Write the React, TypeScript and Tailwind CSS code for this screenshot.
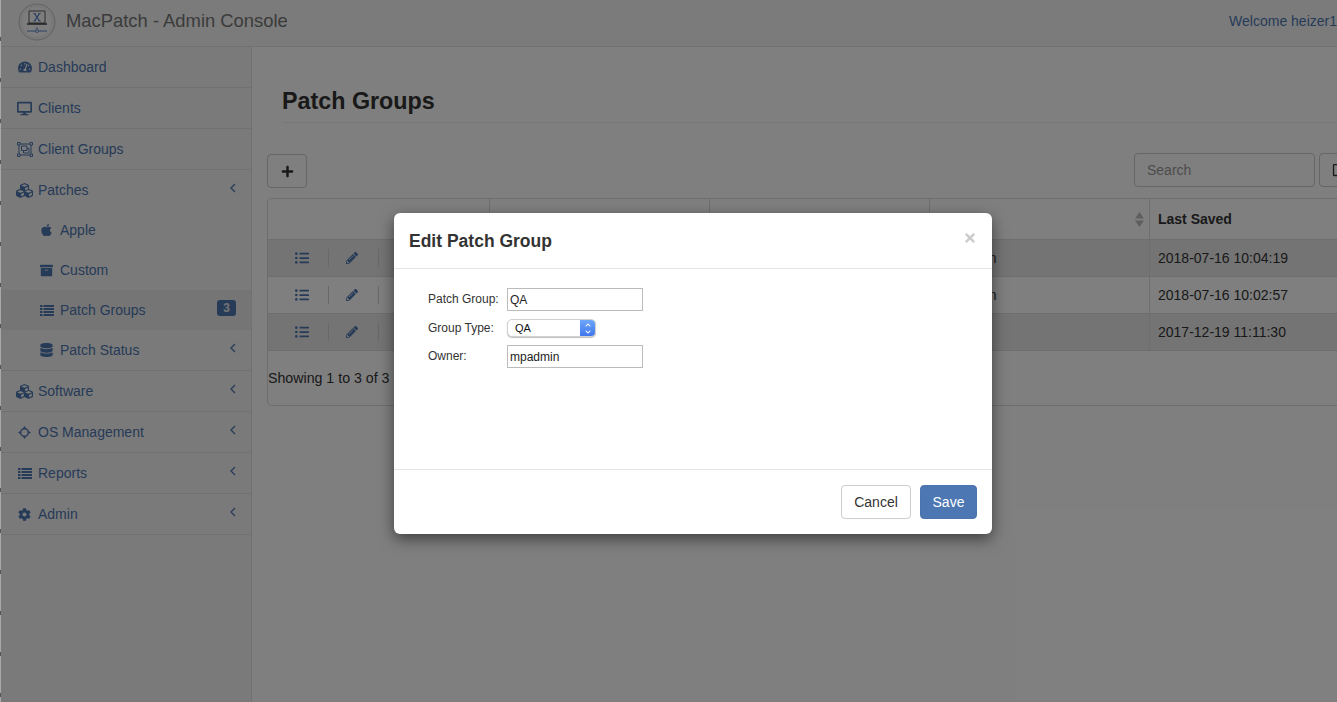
import type { ReactNode } from "react";
import {
  FaApple,
  FaArchive,
  FaChevronDown,
  FaChevronUp,
  FaCog,
  FaCubes,
  FaDatabase,
  FaDesktop,
  FaListUl,
  FaPencilAlt,
  FaPlus,
  FaRegSquare,
  FaTachometerAlt,
  FaTimes,
} from "react-icons/fa";

const font = { fontFamily: '"Liberation Sans", Arial, sans-serif' };

function Logo() {
  return (
    <svg width="38" height="38" viewBox="0 0 38 38" className="shrink-0">
      <circle cx="19" cy="19" r="18" fill="#f2f2f2" stroke="#c4c4c4" strokeWidth="1" />
      <circle cx="19" cy="19" r="15.5" fill="#fafafa" stroke="#e0e0e0" strokeWidth="0.5" />
      <path d="M11 8h16v12H11z" fill="none" stroke="#333" strokeWidth="0.8" />
      <path d="M9 21h20" stroke="#333" strokeWidth="1.4" />
      <path d="M16.5 10.5l5 7.5M21.5 10.5l-5 7.5" stroke="#3f6fc0" strokeWidth="1.1" />
      <path d="M15 10.5h3M20 10.5h3M15 18h3M20 18h3" stroke="#3f6fc0" strokeWidth="0.6" />
      <path d="M9 28h20" stroke="#4a78c8" strokeWidth="0.9" />
      <path d="M19 24v3" stroke="#4a78c8" strokeWidth="0.8" />
      <circle cx="19" cy="28" r="1.5" fill="#fff" stroke="#4a78c8" strokeWidth="0.8" />
    </svg>
  );
}

function ListIcon({ className }: { className?: string }) {
  return (
    <svg viewBox="0 0 14 11" fill="currentColor" className={className}>
      <path d="M0 0h2.5v2H0zM3.5 0H14v2H3.5zM0 3h2.5v2H0zM3.5 3H14v2H3.5zM0 6h2.5v2H0zM3.5 6H14v2H3.5zM0 9h2.5v2H0zM3.5 9H14v2H3.5z" />
    </svg>
  );
}

function GroupIcon() {
  return (
    <svg viewBox="0 0 16 15" width="16" height="15" fill="none" stroke="currentColor" strokeWidth="1">
      <path d="M2 2h12v11H2z" />
      <path d="M0.5 0.5h2.5v2.5H0.5zM13 0.5h2.5v2.5H13zM0.5 12h2.5v2.5H0.5zM13 12h2.5v2.5H13z" fill="#f4f4f4" />
      <path d="M4.5 4h5.5v4.5H4.5z" />
      <path d="M6.5 8.5v2.5h5.5V6.5h-2" />
    </svg>
  );
}

function TargetIcon() {
  return (
    <svg viewBox="0 0 13 13" width="13" height="13" fill="none" stroke="currentColor">
      <circle cx="6.5" cy="6.5" r="3.8" strokeWidth="1.4" />
      <path d="M6.5 0l1.6 2.6H4.9zM6.5 13l1.6-2.6H4.9zM0 6.5l2.6-1.6v3.2zM13 6.5l-2.6-1.6v3.2z" fill="currentColor" stroke="none" />
    </svg>
  );
}

function Arrow() {
  return (
    <svg viewBox="0 0 6 10" width="6" height="10" fill="none" stroke="currentColor" strokeWidth="1.3" className="mb-[4px] ml-auto">
      <path d="M5 1L1 5l4 4" />
    </svg>
  );
}

const menuTop = [
  { label: "Dashboard", icon: <FaTachometerAlt className="size-[14px]" /> },
  { label: "Clients", icon: <FaDesktop className="size-[15px]" /> },
  { label: "Client Groups", icon: <GroupIcon /> },
];

const menuBottom = [
  { label: "Software", icon: <FaCubes className="size-[17px]" /> },
  { label: "OS Management", icon: <TargetIcon /> },
  { label: "Reports", icon: <ListIcon className="h-[11px] w-[14px] shrink-0" /> },
  { label: "Admin", icon: <FaCog className="size-[13px]" /> },
];

function MenuRow({ label, icon, arrow, open }: { label: string; icon: ReactNode; arrow?: boolean; open?: boolean }) {
  return (
    <div
      className={`flex items-center pr-[15px] text-[14px] text-[#4d76b1] ${open ? "h-[40px]" : "h-[41px] border-b border-[#e2e2e2]"}`}
    >
      <span className="flex w-[37px] shrink-0 items-center justify-center pl-[11px] pr-[1px]">{icon}</span>
      <span>{label}</span>
      {arrow && <Arrow />}
    </div>
  );
}

function SubRow({
  label,
  icon,
  active,
  badge,
  arrow,
}: {
  label: string;
  icon: ReactNode;
  active?: boolean;
  badge?: string;
  arrow?: boolean;
}) {
  return (
    <div className={`flex h-[40px] items-center pr-[15px] text-[14px] text-[#4d76b1] ${active ? "bg-[#eaeaea]" : ""}`}>
      <span className="flex w-[59px] shrink-0 items-center justify-center pl-[39px] pr-[7px]">{icon}</span>
      <span>{label}</span>
      {arrow && <Arrow />}
      {badge && (
        <span className="mb-[4px] ml-auto rounded-[3px] bg-[#4d76b1] px-[6px] py-[1px] text-[12px] font-bold leading-[14px] text-[#e8e8e8]">
          {badge}
        </span>
      )}
    </div>
  );
}

const rows = [
  { saved: "2018-07-16 10:04:19", owner: "mpadmin", zebra: true },
  { saved: "2018-07-16 10:02:57", owner: "mpadmin", zebra: false },
  { saved: "2017-12-19 11:11:30", owner: "", zebra: true },
];

function TableRow({ saved, owner, zebra }: { saved: string; owner: string; zebra: boolean }) {
  return (
    <div
      className={`grid h-[37px] grid-cols-[222px_220px_220px_220px_1fr] border-b border-[#dddddd] text-[14px] text-[#333] ${zebra ? "bg-[#e9e9e9]" : ""}`}
    >
      <div className="flex items-center border-r border-[#dddddd] pl-[27px] text-[#4d76b1]">
        <FaListUl className="size-[14px]" />
        <span className="ml-[19px] h-[18px] w-px bg-[#d0d0d0]" />
        <FaPencilAlt className="ml-[17px] size-[12px]" />
        <span className="ml-[20px] h-[18px] w-px bg-[#d0d0d0]" />
      </div>
      <div className="border-r border-[#dddddd]" />
      <div className="border-r border-[#dddddd]" />
      <div className="flex items-center border-r border-[#dddddd] pl-[9px]">{owner}</div>
      <div className="flex items-center pl-[8px]">{saved}</div>
    </div>
  );
}

export default function App() {
  return (
    <div className="relative h-[702px] w-[1337px] overflow-hidden bg-white pl-[1px]" style={font}>
      <header className="flex h-[47px] items-center border-b border-[#e2e2e2] bg-[#f7f7f7] pb-[3px] pl-[17px]">
        <Logo />
        <span className="mb-[2px] ml-[10px] whitespace-nowrap text-[18.4px] text-[#777]">MacPatch - Admin Console</span>
        <span className="ml-auto whitespace-nowrap text-[14px] text-[#4d76b1]">Welcome heizer1</span>
      </header>

      <div className="flex h-[655px]">
        <aside className="h-full w-[251px] shrink-0 border-r border-[#e2e2e2] bg-[#f4f4f4]">
          {menuTop.map((m) => (
            <MenuRow key={m.label} label={m.label} icon={m.icon} />
          ))}
          <MenuRow label="Patches" icon={<FaCubes className="size-[17px]" />} arrow open />
          <div className="border-b border-[#e2e2e2]">
            <SubRow label="Apple" icon={<FaApple className="size-[14px]" />} />
            <SubRow label="Custom" icon={<FaArchive className="size-[13px]" />} />
            <SubRow label="Patch Groups" icon={<ListIcon className="h-[11px] w-[14px] shrink-0" />} active badge="3" />
            <SubRow label="Patch Status" icon={<FaDatabase className="size-[14px]" />} arrow />
          </div>
          {menuBottom.map((m) => (
            <MenuRow key={m.label} label={m.label} icon={m.icon} arrow />
          ))}
        </aside>

        <main className="min-w-0 flex-1 pl-[15px]">
          <div className="ml-[15px] mt-[40px] h-[36px] border-b border-[#eeeeee] text-[23.3px] font-bold leading-[28px] text-[#333]">
            Patch Groups
          </div>

          <div className="mt-[30px] flex h-[35px] items-start">
            <button className="mt-px flex h-[34px] w-[40px] shrink-0 items-center justify-center rounded-[4px] border border-[#cccccc] bg-white text-[#333]">
              <FaPlus className="size-[13px]" />
            </button>
            <div className="ml-[827px] flex h-[34px] w-[181px] shrink-0 items-center rounded-[4px] border border-[#cccccc] bg-white pl-[12px] text-[14px] text-[#999]">
              Search
            </div>
            <div className="ml-[4px] flex h-[34px] w-[40px] shrink-0 items-center rounded-[4px] border border-[#cccccc] bg-white pl-[12px] text-[#333]">
              <FaRegSquare className="size-[14px] shrink-0" />
            </div>
          </div>

          <div className="mt-[10px] h-[208px] w-[1100px] rounded-[4px] border border-[#dddddd]">
            <div className="grid h-[41px] grid-cols-[222px_220px_220px_220px_1fr] border-b border-[#dddddd] text-[14px] font-bold text-[#333]">
              <div className="border-r border-[#dddddd]" />
              <div className="border-r border-[#dddddd]" />
              <div className="border-r border-[#dddddd]" />
              <div className="relative border-r border-[#dddddd]">
                <svg viewBox="0 0 9 15" width="9" height="15" fill="#bdbdbd" className="absolute right-[5px] top-[13px]">
                  <path d="M4.5 0L9 6.5H0zM4.5 15L0 8.5h9z" />
                </svg>
              </div>
              <div className="flex items-center pl-[8px]">Last Saved</div>
            </div>
            {rows.map((r) => (
              <TableRow key={r.saved} saved={r.saved} owner={r.owner} zebra={r.zebra} />
            ))}
            <div className="whitespace-nowrap pt-[17px] text-[14.2px] leading-[20px] text-[#333]">Showing 1 to 3 of 3 rows</div>
          </div>
        </main>
      </div>

      <div className="absolute inset-0 bg-black/50" />
      <div className="absolute inset-y-0 left-0 w-px bg-[repeating-linear-gradient(180deg,#a8a8a8_0px,#a8a8a8_37px,#555555_37px,#555555_41px)]" />

      <div className="absolute left-[394px] top-[213px] w-[598px] rounded-[6px] bg-white shadow-[0_5px_15px_rgba(0,0,0,0.5)]">
        <div className="flex h-[56px] items-center justify-between border-b border-[#e5e5e5] pl-[15px] pr-[15px]">
          <span className="mt-px text-[17.5px] font-bold text-[#333]">Edit Patch Group</span>
          <FaTimes className="mb-[5px] size-[14px] text-[#cccccc]" />
        </div>
        <div className="h-[200px] pl-[34px] pt-[19px] text-[12px] text-[#333]">
          <div className="flex h-[23px] items-center">
            <span className="mb-px w-[79px]">Patch Group:</span>
            <div className="flex h-[23px] w-[136px] items-center border border-[#bbbbbb] pl-[2px] text-[#222]">QA</div>
          </div>
          <div className="mt-[6px] flex h-[22px] items-center">
            <span className="w-[79px]">Group Type:</span>
            <div className="flex h-[18px] w-[89px] items-center overflow-hidden rounded-[5px] border border-[#d0d0d0] bg-white text-[11px] shadow-[0_1px_1px_rgba(0,0,0,0.25)]">
              <span className="flex-1 pl-[7px] text-[#111]">QA</span>
              <span className="flex h-full w-[15px] flex-col items-center justify-center gap-[1px] bg-gradient-to-b from-[#6ea6fa] to-[#3f76ee] text-white">
                <FaChevronUp className="size-[6px]" />
                <FaChevronDown className="size-[6px]" />
              </span>
            </div>
          </div>
          <div className="mt-[6px] flex h-[23px] items-center">
            <span className="mb-px w-[79px]">Owner:</span>
            <div className="flex h-[23px] w-[136px] items-center border border-[#bbbbbb] pl-[2px] text-[#222]">mpadmin</div>
          </div>
        </div>
        <div className="flex h-[65px] items-start justify-end gap-[9px] border-t border-[#e5e5e5] pr-[15px] pt-[15px] text-[14px]">
          <button className="h-[34px] w-[70px] rounded-[4px] border border-[#cccccc] bg-white text-[#333]">Cancel</button>
          <button className="h-[34px] w-[57px] rounded-[4px] border border-[#4a74ae] bg-[#4d77b2] text-white">Save</button>
        </div>
      </div>
    </div>
  );
}
